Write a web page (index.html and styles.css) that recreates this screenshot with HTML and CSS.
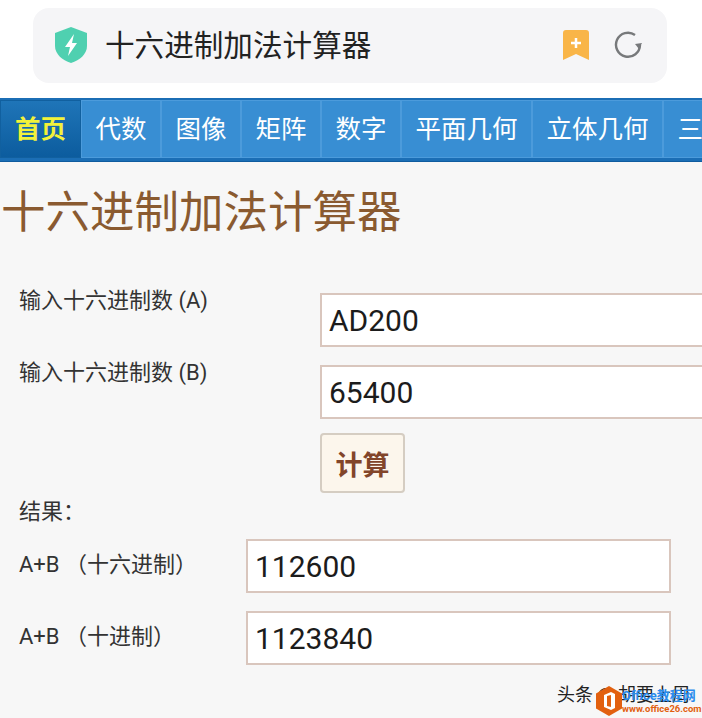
FILE: index.html
```html
<!DOCTYPE html>
<html lang="zh-CN">
<head>
  <meta charset="UTF-8" />
  <meta name="viewport" content="width=device-width, initial-scale=1.0" />
  <title>十六进制加法计算器</title>
  <link rel="stylesheet" href="styles.css">
</head>
<body>
  <header class="top">
    <div class="address">
      <svg class="shield" width="34" height="36" viewBox="0 0 34 36">
        <path d="M17 0 L33 6 V19 C33 27 26 33 17 36 C8 33 1 27 1 19 V6 Z" fill="#4fd0b0"/>
        <path d="M20 7 L11 20 H16 L14 29 L23 16 H18 Z" fill="#fff"/>
      </svg>
      <span class="address-title">十六进制加法计算器</span>
      <svg class="bookmark" width="26" height="30" viewBox="0 0 26 30">
        <path d="M3 0 H23 Q26 0 26 3 V30 L13 24 L0 30 V3 Q0 0 3 0 Z" fill="#f9b548"/>
        <path d="M13 8 V18 M8 13 H18" stroke="#fff" stroke-width="2.5" fill="none"/>
      </svg>
      <svg class="reload" width="28" height="28" viewBox="0 0 28 28">
        <path d="M21 5 A12 12 0 1 0 26 15" stroke="#77797b" stroke-width="2.4" fill="none"/>
        <path d="M21 14 L28 13 L25 19 Z" fill="#77797b"/>
      </svg>
    </div>
  </header>

  <nav class="tabs">
    <a class="tab active" href="#">首页</a>
    <a class="tab" href="#">代数</a>
    <a class="tab" href="#">图像</a>
    <a class="tab" href="#">矩阵</a>
    <a class="tab" href="#">数字</a>
    <a class="tab" href="#">平面几何</a>
    <a class="tab" href="#">立体几何</a>
    <a class="tab" href="#">三</a>
  </nav>

  <main class="content">
    <h1>十六进制加法计算器</h1>
    <div class="field first">
      <label>输入十六进制数 (A)</label>
      <input type="text" value="AD200">
    </div>
    <div class="field">
      <label>输入十六进制数 (B)</label>
      <input type="text" value="65400">
    </div>
    <div class="field action">
      <span></span>
      <button>计算</button>
    </div>
    <p class="result-title">结果：</p>
    <div class="result">
      <label>A+B （十六进制）</label>
      <input type="text" value="112600" readonly>
    </div>
    <div class="result">
      <label>A+B （十进制）</label>
      <input type="text" value="1123840" readonly>
    </div>
  </main>

  <div class="credit">头条 @ 胡要上周</div>
  <div class="stamp">
    <svg width="26" height="30" viewBox="0 0 26 30">
      <path d="M13 0 L26 7.5 V22.5 L13 30 L0 22.5 V7.5 Z" fill="#e2600f"/>
      <path d="M15 6 L8 9 V21 L15 24 L19 22 V8 Z M15 9 V21 L11 20 V10 Z" fill="#fff" fill-rule="evenodd"/>
    </svg>
    <div class="stamp-text">
      <span class="stamp-name">Office教程网</span>
      <span class="stamp-url">www.office26.com</span>
    </div>
  </div>
</body>
</html>
```

FILE: styles.css
```css
html, body {
  margin: 0;
  height: 718px;
  overflow: hidden;
}
body {
  position: relative;
  background: #f7f7f7;
  color: #333;
  font-family: Roboto, "Noto Sans CJK SC", sans-serif;
}

/* browser bar */
.top {
  background: #fff;
  height: 98px;
  padding: 8px 35px 0 33px;
  box-sizing: border-box;
}
.address {
  display: flex;
  align-items: center;
  height: 75px;
  padding: 0 25px 0 21px;
  background: #f5f5f7;
  border-radius: 16px;
}
.shield { margin-right: 17px; margin-top: -2px; }
.address-title {
  flex: 1;
  font-size: 29.6px;
  color: #222;
  margin-top: -4px;
}
.bookmark { margin-right: 25px; margin-top: -2px; }
.reload { margin-top: -3px; }

/* blue menu */
.tabs {
  display: flex;
  height: 64px;
  box-sizing: border-box;
  padding: 2px 0 3px;
  gap: 1px;
  background: #1b6eb5;
  border-bottom: 1px solid #0f5c9f;
  overflow: hidden;
}
.tab {
  flex: none;
  padding: 0 13.5px;
  line-height: 56px;
  font-size: 25.5px;
  color: #fff;
  text-decoration: none;
  background: #388ed3;
  border: 1px solid #4c9bdb;
  margin-right: -1px;
  white-space: nowrap;
}
.tab.active {
  color: #f2f23a;
  font-weight: bold;
  padding: 0 14px;
  background: linear-gradient(#1f75b8, #0c5c9e);
  border-color: #11609f;
}

/* calculator */
h1 {
  margin: 0;
  padding: 20px 0 0 1px;
  font-size: 44.5px;
  font-weight: 400;
  line-height: 62px;
  color: #8a5a30;
}
.content { height: 500px; }
.field {
  display: grid;
  grid-template-columns: 320px 400px;
  margin-bottom: 18px;
}
.field.first { margin-top: 49px; }
.field.action { margin-bottom: 6px; }
label {
  font-size: 22px;
  padding-left: 19px;
  line-height: 30px;
  margin-top: -7px;
}
input {
  box-sizing: border-box;
  height: 54px;
  padding: 0 7px;
  font-family: Roboto, sans-serif;
  font-size: 30px;
  color: #1c1c1c;
  background: #fff;
  border: 2px solid #d9c6bd;
}
button {
  width: 85px;
  height: 60px;
  margin-top: -4px;
  padding: 0;
  font-family: "Noto Sans CJK SC", sans-serif;
  font-size: 27px;
  font-weight: bold;
  color: #82452a;
  background: #fcf6ec;
  border: 2px solid #d5cdc2;
  border-radius: 4px;
}
.result-title {
  margin: 0 0 14px 19px;
  font-size: 22px;
  line-height: 26px;
}
.result {
  display: grid;
  grid-template-columns: 246px 425px;
  margin-bottom: 18px;
}
.result label { margin-top: 11px; }

/* watermarks */
.credit {
  position: absolute;
  left: 557px;
  top: 680px;
  font-size: 18px;
  color: #222;
  font-family: "Noto Sans CJK SC", sans-serif;
}
.stamp {
  position: absolute;
  left: 596px;
  top: 686px;
  display: flex;
  align-items: center;
}
.stamp-text {
  display: flex;
  flex-direction: column;
  white-space: nowrap;
}
.stamp-name {
  font-size: 13px;
  line-height: 14px;
  font-weight: bold;
  color: #2a8cec;
}
.stamp-url {
  font-size: 9.5px;
  line-height: 11px;
  font-weight: bold;
  color: #e2600f;
}
```
